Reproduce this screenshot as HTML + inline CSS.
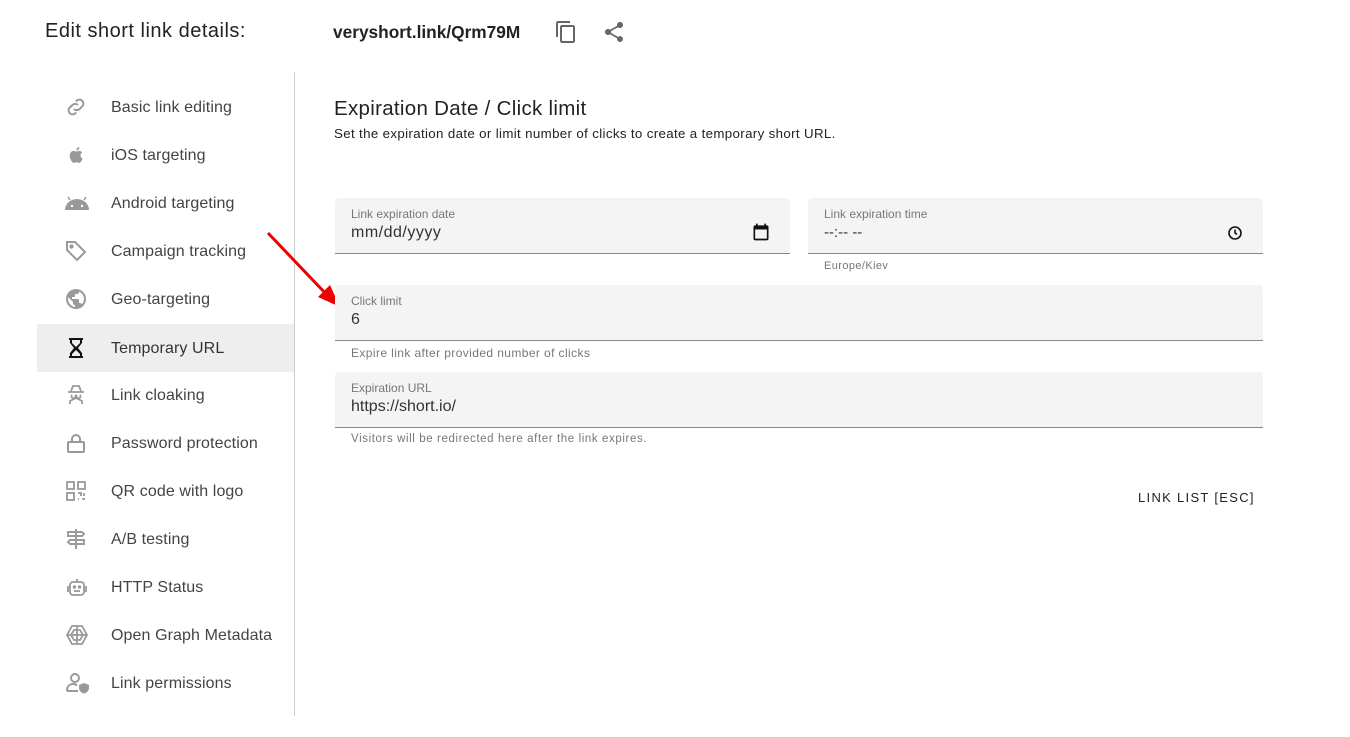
<!DOCTYPE html>
<html><head><style>
body{margin:0;width:1350px;height:737px;background:#fff;font-family:"Liberation Sans",sans-serif;position:relative;overflow:hidden;color:#222}
.a{position:absolute}
.nav{position:absolute;left:37px;width:257px;height:48px}
.nav span{position:absolute;left:74px;top:16px;font-size:16px;color:#444;white-space:nowrap;letter-spacing:.1px}
.nav svg{position:absolute;left:27px;top:12px}
.f{position:absolute;background:#f4f4f4;border-bottom:1px solid #888;border-radius:4px 4px 0 0}
.lbl{position:absolute;left:16px;top:9px;font-size:12px;color:#777}
.val{position:absolute;left:16px;top:26px;font-size:16px;color:#333}
.hint{position:absolute;font-size:12px;color:#777;letter-spacing:.4px}
</style></head><body>
<div class="a" style="left:45px;top:20px;font-size:20px;letter-spacing:.5px;color:#222">Edit short link details:</div>
<div class="a" style="left:333px;top:22px;font-size:17.3px;font-weight:bold;color:#222">veryshort.link/Qrm79M</div>
<svg class="a" style="left:554px;top:20px" width="24" height="24" viewBox="0 0 24 24"><path fill="#666" d="M16 1H4c-1.1 0-2 .9-2 2v14h2V3h12V1zm3 4H8c-1.1 0-2 .9-2 2v14c0 1.1.9 2 2 2h11c1.1 0 2-.9 2-2V7c0-1.1-.9-2-2-2zm0 16H8V7h11v14z"/></svg>
<svg class="a" style="left:602px;top:20px" width="24" height="24" viewBox="0 0 24 24"><path fill="#666" d="M18 16.08c-.76 0-1.44.3-1.96.77L8.91 12.7c.05-.23.09-.46.09-.7s-.04-.47-.09-.7l7.050-4.110c.540.500 1.250.810 2.040.810 1.660 0 3-1.340 3-3s-1.340-3-3-3-3 1.340-3 3c0 .240.040.470.090.700L8.040 9.810C7.500 9.310 6.790 9 6 9c-1.660 0-3 1.340-3 3s1.340 3 3 3c.790 0 1.500-.310 2.040-.810l7.120 4.160c-.050.210-.080.430-.080.650 0 1.610 1.310 2.920 2.920 2.920s2.920-1.310 2.920-2.920-1.310-2.920-2.920-2.920z"/></svg>
<div class="a" style="left:294px;top:72px;width:1px;height:644px;background:#ccc"></div>

<div class="nav" style="top:83px"><svg width="24" height="24" viewBox="0 0 24 24" fill="none" stroke="#999" stroke-width="2"><path d="M10 14a4 4 0 0 0 5.6 0l3-3a4 4 0 0 0-5.6-5.6l-1.2 1.2M14 10a4 4 0 0 0-5.6 0l-3 3a4 4 0 0 0 5.6 5.6l1.2-1.2"/></svg><span>Basic link editing</span></div>
<div class="nav" style="top:131px"><svg width="24" height="24" viewBox="0 0 24 24"><path fill="#999" d="M16.5 12.5c0-2 1.6-2.9 1.7-3-1-1.4-2.4-1.6-2.9-1.6-1.2-.1-2.4.7-3 .7s-1.6-.7-2.6-.7c-1.3 0-2.6.8-3.3 2-1.4 2.4-.4 6 1 8 .7 1 1.5 2 2.5 2s1.4-.6 2.6-.6 1.5.6 2.6.6 1.7-1 2.4-2c.8-1.1 1.1-2.2 1.1-2.3-.1 0-2.1-.8-2.1-3.1zM14.6 6.5c.5-.7.9-1.6.8-2.5-.8 0-1.7.5-2.3 1.200-.5.6-.9 1.5-.8 2.4.9.1 1.7-.4 2.3-1.1z"/></svg><span>iOS targeting</span></div>
<div class="nav" style="top:179px"><svg width="26" height="24" viewBox="0 0 24 24"><path fill="#999" d="M0 19a12 11 0 0 1 24 0z"/><circle cx="7" cy="15" r="1.2" fill="#fff"/><circle cx="17" cy="15" r="1.2" fill="#fff"/><path d="M5 9 3 6M19 9l2-3" stroke="#999" stroke-width="1.5"/></svg><span>Android targeting</span></div>
<div class="nav" style="top:227px"><svg width="24" height="24" viewBox="0 0 24 24" fill="none" stroke="#999" stroke-width="2"><path d="M3 3h8l10 10-8 8L3 11z"/><circle cx="7.5" cy="7.5" r="1.2" fill="#999"/></svg><span>Campaign tracking</span></div>
<div class="nav" style="top:275px"><svg width="24" height="24" viewBox="0 0 24 24"><path fill="#999" d="M12 2a10 10 0 1 0 0 20 10 10 0 0 0 0-20zm-1 17.9A8 8 0 0 1 4.2 10.2L9 15v1a2 2 0 0 0 2 2zm6.9-2.5A2 2 0 0 0 16 16h-1v-3a1 1 0 0 0-1-1H8v-2h2a1 1 0 0 0 1-1V7h2a2 2 0 0 0 2-2v-.4a8 8 0 0 1 2.9 12.8z"/></svg><span>Geo-targeting</span></div>
<div class="nav" style="top:324px;background:#eee"><svg width="24" height="24" viewBox="0 0 24 24"><path fill="#111" d="M5 2h14v2h-1v3l-4 5 4 5v3h1v2H5v-2h1v-3l4-5-4-5V4H5zm3 2v3l4 4 4-4V4z M8 20h8v-2l-4-4-4 4z"/></svg><span style="color:#333">Temporary URL</span></div>
<div class="nav" style="top:371px"><svg width="24" height="24" viewBox="0 0 24 24" fill="none" stroke="#999" stroke-width="1.8"><path d="M7 8l2-5h6l2 5M4 9h16M8 12a2 2 0 1 0 3 0M13 12a2 2 0 1 0 3 0M6 21v-3l6-3 6 3v3"/></svg><span>Link cloaking</span></div>
<div class="nav" style="top:419px"><svg width="24" height="24" viewBox="0 0 24 24" fill="none" stroke="#999" stroke-width="2"><rect x="4" y="11" width="16" height="10" rx="1"/><path d="M8 11V8a4 4 0 0 1 8 0v3"/></svg><span>Password protection</span></div>
<div class="nav" style="top:467px"><svg width="24" height="24" viewBox="0 0 24 24" fill="none" stroke="#999" stroke-width="1.8"><rect x="3" y="3" width="7" height="7"/><rect x="14" y="3" width="7" height="7"/><rect x="3" y="14" width="7" height="7"/><path d="M14 14h3v3M20 14v3M14 20h1M18 20h3"/></svg><span>QR code with logo</span></div>
<div class="nav" style="top:515px"><svg width="24" height="24" viewBox="0 0 24 24" fill="none" stroke="#999" stroke-width="1.9"><path d="M12 2v20M4 5h14l2 2-2 2H4zM20 13H6l-2 2 2 2h14z"/></svg><span>A/B testing</span></div>
<div class="nav" style="top:563px"><svg width="26" height="24" viewBox="0 0 24 24" fill="none" stroke="#999" stroke-width="1.8"><rect x="5" y="7" width="14" height="13" rx="3"/><path d="M12 7V4M3 11v6M21 11v6"/><circle cx="9.5" cy="12" r=".8" fill="#999"/><circle cx="14.5" cy="12" r=".8" fill="#999"/><path d="M9 16h6"/></svg><span>HTTP Status</span></div>
<div class="nav" style="top:611px"><svg width="26" height="24" viewBox="0 0 24 24" fill="none" stroke="#999" stroke-width="1.8"><path d="M7 3h10l5 9-5 9H7l-5-9z M12 3v18M2 12h20M9 7h6l3 5-3 5H9l-3-5z"/></svg><span>Open Graph Metadata</span></div>
<div class="nav" style="top:659px"><svg width="28" height="24" viewBox="0 0 26 24" fill="none" stroke="#999" stroke-width="1.9"><circle cx="10" cy="7" r="4"/><path d="M2 20v-1a6 6 0 0 1 10-4.5M2 20h11"/><path d="M19 13l4 1.5v3c0 2-2 3.5-4 4-2-.5-4-2-4-4v-3z" fill="#999"/></svg><span>Link permissions</span></div>

<svg class="a" style="left:0;top:0" width="1350" height="737"><line x1="268" y1="233" x2="328" y2="296" stroke="#e00" stroke-width="3"/><path d="M340 307 L318 297 L330 285 Z" fill="#e00"/></svg>

<div class="a" style="left:334px;top:97px;font-size:20.5px;letter-spacing:.3px;color:#222">Expiration Date / Click limit</div>
<div class="a" style="left:334px;top:126px;font-size:13.3px;letter-spacing:.35px;color:#222">Set the expiration date or limit number of clicks to create a temporary short URL.</div>

<div class="f" style="left:335px;top:198px;width:455px;height:55px"><div class="lbl">Link expiration date</div><div class="val" style="letter-spacing:.5px">mm/dd/yyyy</div>
<svg class="a" style="left:416px;top:24px" width="20" height="20" viewBox="0 0 24 24"><path fill="#111" d="M19 4h-1V2h-2v2H8V2H6v2H5a2 2 0 0 0-2 2v14a2 2 0 0 0 2 2h14a2 2 0 0 0 2-2V6a2 2 0 0 0-2-2zm0 16H5V9h14z"/></svg></div>
<div class="f" style="left:808px;top:198px;width:455px;height:55px"><div class="lbl">Link expiration time</div><div class="val" style="font-size:15px;top:26px">--:-- --</div>
<svg class="a" style="left:419px;top:27px" width="16" height="16" viewBox="0 0 24 24" fill="none" stroke="#111" stroke-width="2.4"><circle cx="12" cy="12" r="9"/><path d="M12 7v5l3 2"/></svg></div>
<div class="hint" style="left:824px;top:260px;font-size:11px">Europe/Kiev</div>

<div class="f" style="left:335px;top:285px;width:928px;height:55px"><div class="lbl">Click limit</div><div class="val">6</div></div>
<div class="hint" style="left:351px;top:346px">Expire link after provided number of clicks</div>
<div class="f" style="left:335px;top:372px;width:928px;height:55px"><div class="lbl">Expiration URL</div><div class="val">https://short.io/</div></div>
<div class="hint" style="left:351px;top:433px;font-size:11.5px;letter-spacing:.6px">Visitors will be redirected here after the link expires.</div>

<div class="a" style="left:1138px;top:490px;font-size:13px;letter-spacing:1.3px;color:#222">LINK LIST [ESC]</div>
</body></html>
